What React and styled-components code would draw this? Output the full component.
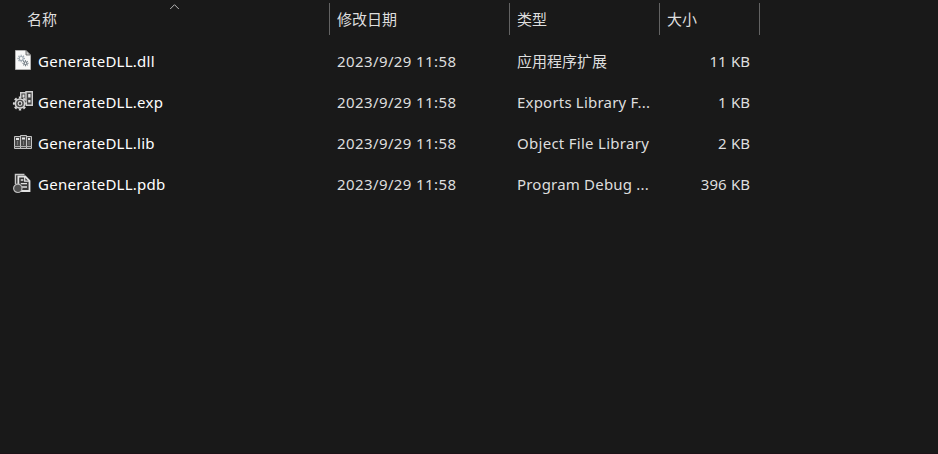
import React from "react";
import styled, { createGlobalStyle } from "styled-components";

const GlobalStyle = createGlobalStyle`
  body { margin: 0; background: #191919; }
  * { box-sizing: border-box; }
`;

const Explorer = styled.main`
  width: 938px;
  height: 454px;
  overflow: hidden;
  background: #191919;
  border-bottom: 1px solid #1b1217;
  color: #dedede;
  font: 15px/20px "Noto Sans", "Noto Sans CJK SC", sans-serif;
  white-space: nowrap;
`;

const Header = styled.header`
  display: grid;
  grid-template-columns: 330px 180px 150px 100px;
  height: 41px;
  padding-top: 3px;
`;

const HeaderCell = styled.div`
  position: relative;
  height: 32px;
  padding: 6px 0 0 ${(p) => (p.$first ? 27 : 7)}px;
  border-right: 1px solid #636363;
  font-family: "Noto Sans CJK SC", sans-serif;
`;

const SortArrow = styled.svg`
  position: absolute;
  left: 169px;
  top: 0;
`;

const Row = styled.div`
  display: grid;
  grid-template-columns: 330px 180px 150px 90px;
  align-items: start;
  height: 41px;
  padding-top: 10px;
`;

const NameCell = styled.div`
  display: flex;
  align-items: flex-start;
  gap: 2px;
  padding-left: 12px;
  color: #fff;
  letter-spacing: 0.26px;
`;

const Cell = styled.div`
  padding-left: 7px;
  letter-spacing: ${(p) => p.$track || 0}px;
`;

const SizeCell = styled(Cell)`
  text-align: right;
  word-spacing: 0.5px;
`;

const Icon = styled.svg`
  display: block;
  flex: none;
  width: 24px;
  height: 24px;
  margin: -3px 0 -1px;
`;

const Gear = ({ cx, cy, r, teeth, color, fill = "none", width = 1 }) => (
  <g fill="none" stroke={color}>
    <circle cx={cx} cy={cy} r={r} fill={fill} strokeWidth={width} />
    <circle
      cx={cx}
      cy={cy}
      r={r + width}
      strokeWidth={width * 1.3}
      pathLength={teeth * 2}
      strokeDasharray="1 1"
      strokeDashoffset="0.5"
    />
  </g>
);

const DllIcon = () => (
  <Icon viewBox="0 0 24 24">
    <path d="M3.5 2.5H14l4.5 4.5v14.5h-15z" fill="#f8f8f8" stroke="#b0b0b0" />
    <path d="M14 2v5h4.5z" fill="#d0d0d0" stroke="#555" strokeWidth="0.8" />
    <Gear cx={9.2} cy={10.5} r={2} teeth={8} color="#9da8b1" width={1.1} />
    <Gear cx={13.5} cy={15.2} r={1.4} teeth={8} color="#5d6973" width={1} />
  </Icon>
);

const ExpIcon = () => (
  <Icon viewBox="0 0 24 24">
    <path d="M8.7 3.7h5.3v12H8.7zM14 2.7h6.3v13.6H14z" fill="#444" stroke="#cfcfcf" strokeWidth="1.4" />
    <path d="M10.5 5.5h2v3h-2zM16.2 5h2.3v3.5h-2.3zM16.2 11h2.3v2.5h-2.3z" fill="#e2e2e2" />
    <circle cx="8" cy="14.5" r="6" fill="#303030" />
    <Gear cx={8} cy={14.5} r={4.6} teeth={8} color="#d6d6d6" fill="#4b4b4b" width={1.5} />
    <circle cx="8" cy="14.5" r="1.8" fill="#303030" stroke="#d6d6d6" strokeWidth="1.2" />
  </Icon>
);

const LibIcon = () => (
  <Icon viewBox="0 0 24 24">
    <path d="M2.5 6.5h6v12h-6zM8.5 5.5h6v13h-6zM14.5 6.5h5v12h-5z" fill="#484848" stroke="#c4c4c4" />
    <path d="M4 9h3M10 8.5h3M16 9h2" stroke="#e6e6e6" strokeWidth="1.8" />
    <path d="M5.5 11v4M11.5 11v4M17 11v4" stroke="#777" />
    <path d="M2 16.5h18" stroke="#b0b0b0" />
  </Icon>
);

const PdbIcon = () => (
  <Icon viewBox="0 0 24 24">
    <path d="M3.5 13V3.5H12.5" fill="none" stroke="#c8c8c8" strokeWidth="1.5" />
    <path d="M6.3 5.5h6.9l4.3 4.3v10.2H6.3z" fill="#373737" stroke="#e1e1e1" strokeWidth="1.8" />
    <path d="M12.7 6v4.2H17M8.8 9h2.5M8.8 12.7h6.2M9.5 16h5.5" fill="none" stroke="#e1e1e1" strokeWidth="1.3" />
    <circle cx="5.8" cy="17.3" r="4.2" fill="#505050" stroke="#bcbcbc" strokeWidth="1.2" />
  </Icon>
);

const files = [
  { name: "GenerateDLL.dll", type: "应用程序扩展", track: 0, size: "11 KB", icon: DllIcon },
  { name: "GenerateDLL.exp", type: "Exports Library F...", track: 0.2, size: "1 KB", icon: ExpIcon },
  { name: "GenerateDLL.lib", type: "Object File Library", track: 0.28, size: "2 KB", icon: LibIcon },
  { name: "GenerateDLL.pdb", type: "Program Debug ...", track: 0.2, size: "396 KB", icon: PdbIcon },
];

export default function App() {
  return (
    <Explorer>
      <GlobalStyle />
      <Header>
        <HeaderCell $first>
          名称
          <SortArrow width="11" height="8" viewBox="0 0 11 8">
            <path d="M1.2 6 5.5 1.7 9.8 6" fill="none" stroke="#b8b8b8" />
          </SortArrow>
        </HeaderCell>
        <HeaderCell>修改日期</HeaderCell>
        <HeaderCell>类型</HeaderCell>
        <HeaderCell>大小</HeaderCell>
      </Header>
      {files.map(({ name, type, track, size, icon: FileIcon }) => (
        <Row key={name}>
          <NameCell><FileIcon />{name}</NameCell>
          <Cell $track={0.4}>2023/9/29 11:58</Cell>
          <Cell $track={track}>{type}</Cell>
          <SizeCell>{size}</SizeCell>
        </Row>
      ))}
    </Explorer>
  );
}
